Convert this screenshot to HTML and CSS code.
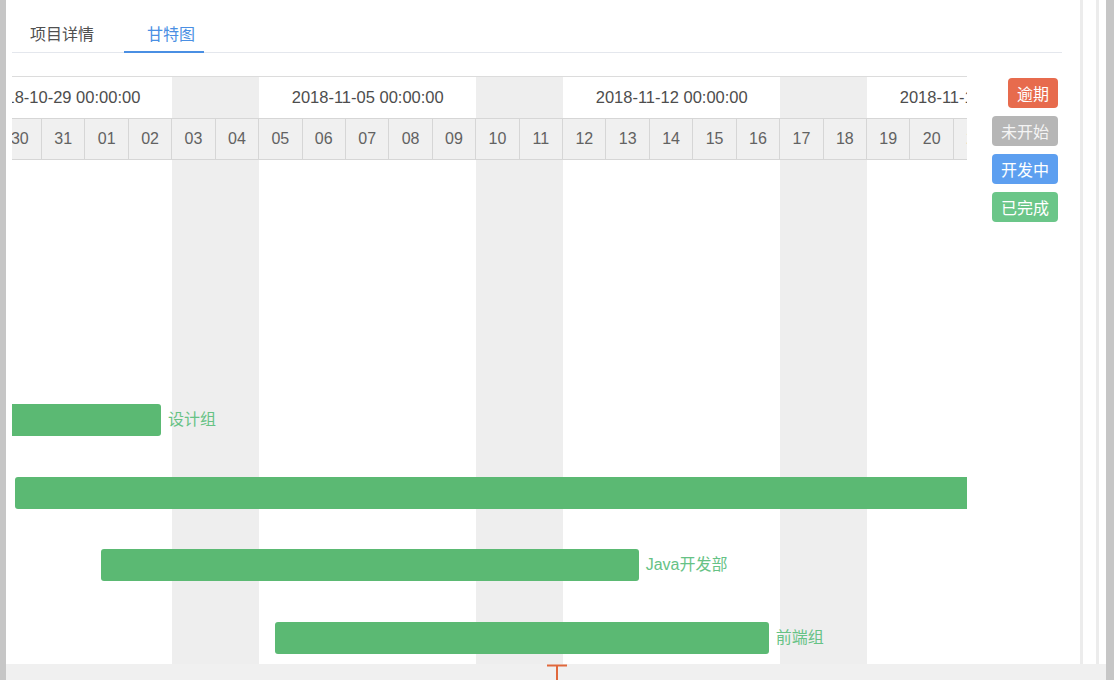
FILE: index.html
```html
<!DOCTYPE html>
<html lang="zh-CN">
<head>
<meta charset="utf-8">
<title>甘特图</title>
<link rel="stylesheet" href="styles.css">
</head>
<body>
<div class="frame">
  <div class="edge"></div>
  <div class="window">
    <div class="main">
      <div class="panel">
        <div class="tabs">
          <div class="tab">项目详情</div>
          <div class="tab active">甘特图</div>
        </div>
        <div class="gantt-area">
          <div class="viewport">
            <div class="track">
              <div class="weeks">
                <div class="week"><span>2018-10-29 00:00:00</span></div>
                <div class="week"><span>2018-11-05 00:00:00</span></div>
                <div class="week"><span>2018-11-12 00:00:00</span></div>
                <div class="week"><span>2018-11-19 00:00:00</span></div>
              </div>
              <div class="days">
                <div class="day">29</div><div class="day">30</div><div class="day">31</div><div class="day">01</div><div class="day">02</div><div class="day">03</div><div class="day">04</div>
                <div class="day">05</div><div class="day">06</div><div class="day">07</div><div class="day">08</div><div class="day">09</div><div class="day">10</div><div class="day">11</div>
                <div class="day">12</div><div class="day">13</div><div class="day">14</div><div class="day">15</div><div class="day">16</div><div class="day">17</div><div class="day">18</div>
                <div class="day">19</div><div class="day">20</div><div class="day">21</div><div class="day">22</div><div class="day">23</div><div class="day">24</div><div class="day">25</div>
              </div>
              <div class="rows">
                <div class="row"><div class="bar" style="margin-left:0px;width:205.9px"></div><span class="bar-label">设计组</span></div>
                <div class="row"><div class="bar" style="margin-left:59.6px;width:1150px"></div></div>
                <div class="row"><div class="bar" style="margin-left:146.2px;width:537.3px"></div><span class="bar-label">Java开发部</span></div>
                <div class="row"><div class="bar" style="margin-left:320.2px;width:493.3px"></div><span class="bar-label">前端组</span></div>
              </div>
            </div>
          </div>
          <div class="legend">
            <div class="tag tag-late">逾期</div>
            <div class="tag tag-todo">未开始</div>
            <div class="tag tag-doing">开发中</div>
            <div class="tag tag-done">已完成</div>
          </div>
        </div>
      </div>
      <div class="rail"><div class="rail-line"></div></div>
    </div>
    <div class="statusbar">
      <svg class="cursor" width="20" height="16" viewBox="0 0 20 16"><path d="M0 1.5H20M10 1.5V16" stroke="#e0683c" stroke-width="2" fill="none"/></svg>
    </div>
  </div>
  <div class="edge edge-right"></div>
</div>
</body>
</html>
```
FILE: styles.css
```css
html, body {
  margin: 0;
  height: 100%;
}
body {
  font-family: "Liberation Sans", "Noto Sans CJK SC", sans-serif;
  overflow: hidden;
  background: #fff;
}
.frame {
  display: flex;
  width: 1114px;
  height: 680px;
}
.edge {
  flex: none;
  width: 6px;
  background: #c6c6c6;
}
.edge-right {
  width: 8px;
}
.window {
  flex: 1;
  min-width: 0;
  display: flex;
  flex-direction: column;
}
.main {
  flex: 1;
  min-height: 0;
  display: flex;
  background: #fff;
}
.panel {
  flex: 1;
  min-width: 0;
  padding: 0 18px 0 6px;
  display: flex;
  flex-direction: column;
  overflow: hidden;
}
.tabs {
  flex: none;
  display: flex;
  height: 53px;
  padding-left: 18px;
  background: linear-gradient(#e4e7ed, #e4e7ed) left bottom / 100% 1px no-repeat;
  background-position: 0 52px;
}
.tab {
  font-family: "Noto Sans CJK SC", sans-serif;
  font-size: 16px;
  color: #505050;
  line-height: 40px;
  padding-top: 13px;
  white-space: nowrap;
}
.tab.active {
  margin-left: 30px;
  padding-left: 23px;
  padding-right: 9px;
  color: #4a8fe3;
  box-shadow: inset 0 -2px 0 #4a8fe3;
}
.gantt-area {
  flex: 1;
  min-height: 0;
  display: flex;
  margin-top: 23px;
}
.viewport {
  flex: none;
  width: 955px;
  border-top: 1px solid #dcdcdc;
  overflow: hidden;
  display: flex;
  flex-direction: column;
}
.track {
  flex: 1;
  flex-shrink: 0;
  width: 1216px;
  margin-left: -56.857px;
  display: flex;
  flex-direction: column;
  background-image: linear-gradient(to right, transparent 217.143px, #eeeeee 217.143px);
  background-size: 304px 100%;
  background-repeat: repeat-x;
}
.weeks {
  flex: none;
  display: flex;
  height: 41px;
}
.week {
  flex: none;
  width: 304px;
}
.week span {
  display: block;
  width: 217.143px;
  text-align: center;
  line-height: 41px;
  font-size: 16.5px;
  color: #4d4d4d;
  white-space: nowrap;
}
.days {
  flex: none;
  display: flex;
  height: 42px;
  box-sizing: border-box;
  border-top: 1px solid #d6d6d6;
  border-bottom: 1px solid #d6d6d6;
  background: #f0f0f0;
}
.day {
  flex: none;
  width: 43.4286px;
  box-sizing: border-box;
  border-right: 1px solid #d6d6d6;
  text-align: center;
  line-height: 40px;
  font-size: 16px;
  color: #626262;
}
.rows {
  flex: 1;
  padding-top: 244px;
  display: flex;
  flex-direction: column;
}
.row {
  flex: none;
  height: 72.67px;
  display: flex;
  align-items: flex-start;
}
.bar {
  flex: none;
  height: 32px;
  border-radius: 3px;
  background: #5bb973;
}
.bar-label {
  margin-left: 7px;
  line-height: 32px;
  font-size: 16px;
  color: #66c285;
  white-space: nowrap;
}
.legend {
  margin-left: auto;
  margin-right: 4px;
  margin-top: 2px;
  display: flex;
  flex-direction: column;
  align-items: flex-end;
  gap: 8px;
}
.tag {
  height: 30px;
  line-height: 30px;
  padding: 0 9px;
  border-radius: 4px;
  color: #fff;
  font-family: "Noto Sans CJK SC", sans-serif;
  font-size: 16px;
  white-space: nowrap;
}
.tag-late { background: #e76b4d; }
.tag-todo { background: #b6b6b6; color: #f4f4f4; }
.tag-doing { background: #5d9ff0; }
.tag-done { background: #6bc689; }
.rail {
  flex: none;
  width: 26px;
  box-sizing: border-box;
  border-left: 3px solid #ececec;
  padding-left: 13px;
  display: flex;
}
.rail-line {
  width: 3px;
  background: #ececec;
}
.statusbar {
  flex: none;
  height: 16px;
  background: #f0f0f0;
  padding-left: 541px;
  display: flex;
}
.cursor {
  display: block;
}
```
